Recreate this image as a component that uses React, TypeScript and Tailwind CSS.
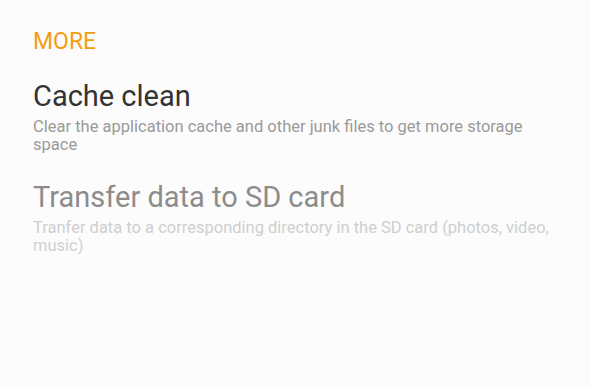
export default function App() {
  const items = [
    {
      title: "Cache clean",
      description:
        "Clear the application cache and other junk files to get more storage space",
      enabled: true,
    },
    {
      title: "Transfer data to SD card",
      description:
        "Tranfer data to a corresponding directory in the SD card (photos, video, music)",
      enabled: false,
    },
  ];

  return (
    <div className="w-[590px] h-[389px] bg-[#fcfcfc] font-['Roboto',sans-serif] pl-[33px] pr-[40px] pt-[28px]">
      <h2 className="text-[23px] leading-[28px] text-[#f39c12]">MORE</h2>
      <ul className="mt-[23px] flex flex-col gap-[26px]">
        {items.map((item) => (
          <li key={item.title}>
            <div
              className={`text-[29px] leading-[34px] ${
                item.enabled ? "text-[#333333]" : "text-[#8c8c8c]"
              }`}
            >
              {item.title}
            </div>
            <p
              className={`text-[16.5px] leading-[18px] mt-[5px] ${
                item.enabled ? "text-[#9a9a9a]" : "text-[#cfcfcf]"
              }`}
            >
              {item.description}
            </p>
          </li>
        ))}
      </ul>
    </div>
  );
}
